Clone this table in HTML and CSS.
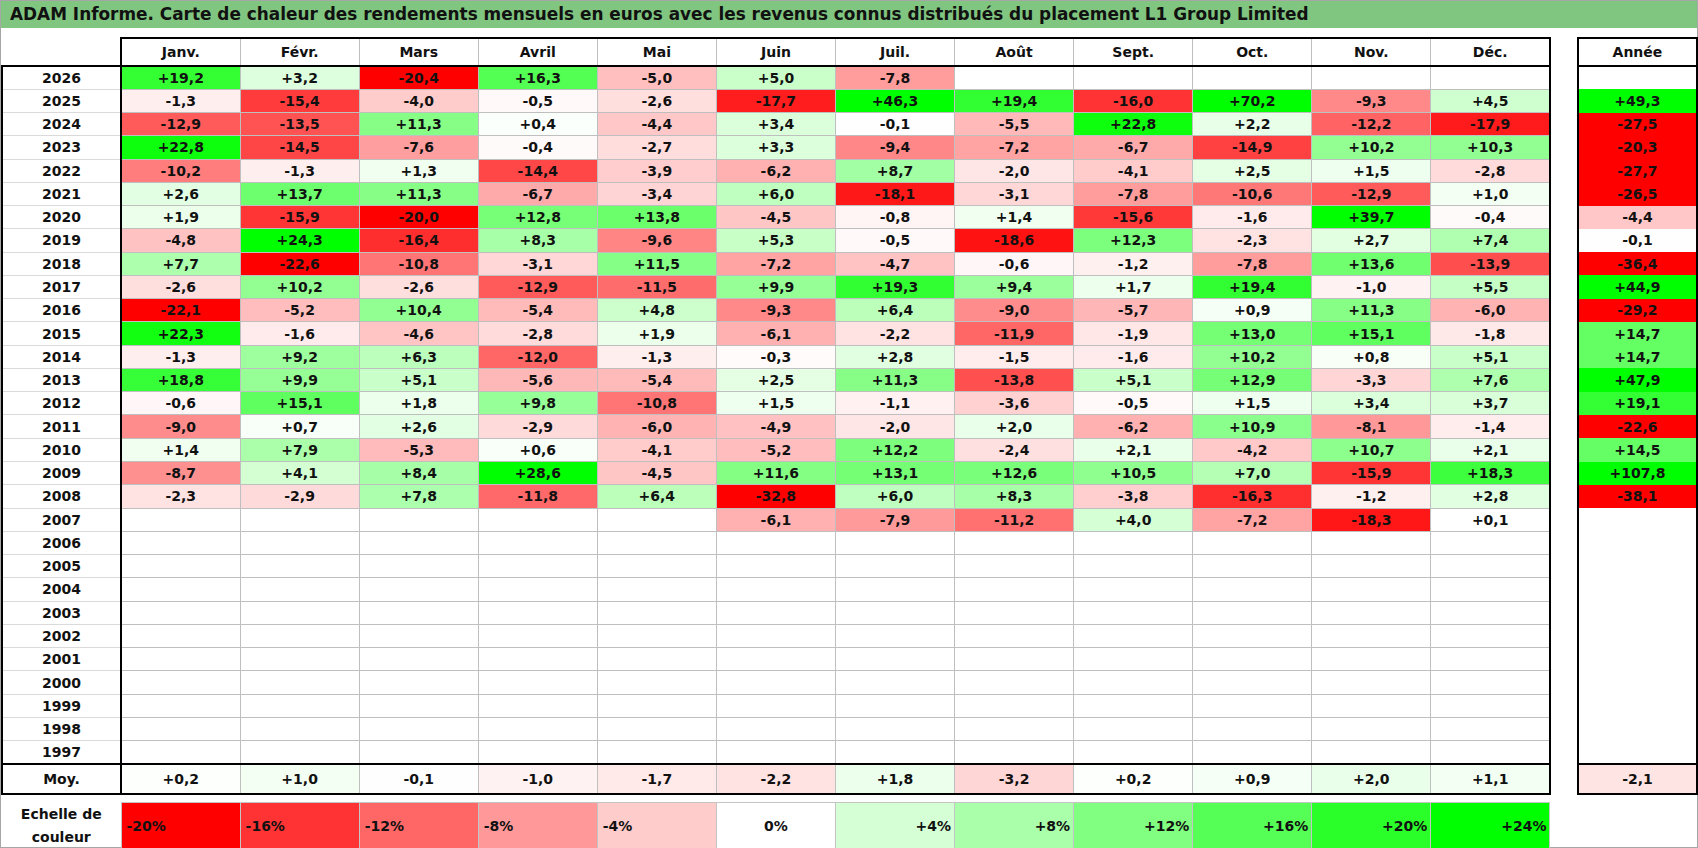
FILE: index.html
```html
<!DOCTYPE html>
<html lang="fr">
<head>
<meta charset="utf-8">
<title>ADAM Informe - Carte de chaleur</title>
<link rel="stylesheet" href="styles.css">
</head>
<body>
<div class="sheet">
  <div class="title">ADAM Informe. Carte de chaleur des rendements mensuels en euros avec les revenus connus distribués du placement L1 Group Limited</div>
  <table class="grid">
    <colgroup>
      <col class="c-lab">
      <col class="c-m"><col class="c-m"><col class="c-m"><col class="c-m"><col class="c-m"><col class="c-m">
      <col class="c-m"><col class="c-m"><col class="c-m"><col class="c-m"><col class="c-m"><col class="c-m">
      <col class="c-gap">
      <col class="c-yr">
    </colgroup>
    <thead>
      <tr class="hdr">
        <th class="lab0"></th>
        <th class="m first">Janv.</th>
        <th class="m">Févr.</th>
        <th class="m">Mars</th>
        <th class="m">Avril</th>
        <th class="m">Mai</th>
        <th class="m">Juin</th>
        <th class="m">Juil.</th>
        <th class="m">Août</th>
        <th class="m">Sept.</th>
        <th class="m">Oct.</th>
        <th class="m">Nov.</th>
        <th class="m last">Déc.</th>
        <th class="gap"></th>
        <th class="yr">Année</th>
      </tr>
    </thead>
    <tbody id="rows"></tbody>
    <tbody>
      <tr class="moy">
        <td class="lab">Moy.</td>
        <td class="m v">+0,2</td>
        <td class="m v">+1,0</td>
        <td class="m v">-0,1</td>
        <td class="m v">-1,0</td>
        <td class="m v">-1,7</td>
        <td class="m v">-2,2</td>
        <td class="m v">+1,8</td>
        <td class="m v">-3,2</td>
        <td class="m v">+0,2</td>
        <td class="m v">+0,9</td>
        <td class="m v">+2,0</td>
        <td class="m v last">+1,1</td>
        <td class="gap"></td>
        <td class="yr v">-2,1</td>
      </tr>
      <tr class="sp"><td colspan="15"></td></tr>
      <tr class="leg">
        <td class="leglab">Echelle de<br>couleur</td>
        <td class="lg v neg">-20%</td>
        <td class="lg v neg">-16%</td>
        <td class="lg v neg">-12%</td>
        <td class="lg v neg">-8%</td>
        <td class="lg v neg">-4%</td>
        <td class="lg v zero">0%</td>
        <td class="lg v pos">+4%</td>
        <td class="lg v pos">+8%</td>
        <td class="lg v pos">+12%</td>
        <td class="lg v pos">+16%</td>
        <td class="lg v pos">+20%</td>
        <td class="lg v pos">+24%</td>
        <td class="gap"></td>
        <td class="gap"></td>
      </tr>
    </tbody>
  </table>
</div>
<script src="script.js"></script>
</body>
</html>
```
FILE: styles.css
```css
html, body {
  margin: 0;
  padding: 0;
  background: #ffffff;
}
body {
  width: 1698px;
  height: 848px;
  overflow: hidden;
  font-family: "DejaVu Sans", "Liberation Sans", sans-serif;
}
.sheet {
  box-sizing: border-box;
  width: 1698px;
  height: 848px;
  border: 1px solid #a6a6a6;
}
.title {
  height: 27px;
  background: #80c680;
  font-weight: bold;
  font-size: 16.9px;
  line-height: 27px;
  padding-left: 9px;
  color: #111111;
  white-space: nowrap;
  overflow: hidden;
}
.grid {
  margin-top: 9px;
  border-collapse: collapse;
  table-layout: fixed;
  width: 1695px;
  font-weight: bold;
  font-size: 14px;
  color: #111111;
}
.grid td, .grid th {
  padding: 0;
  text-align: center;
  vertical-align: middle;
  white-space: nowrap;
  overflow: hidden;
  font-weight: bold;
}
.c-lab { width: 119px; }
.c-m { width: 119.08px; }
.c-gap { width: 28px; }
.c-yr { width: 119px; }

.hdr { height: 28px; }
.hdr th.m {
  border-top: 2px solid #000;
  border-bottom: 2px solid #000;
  border-left: 1px solid #bfbfbf;
  border-right: 1px solid #bfbfbf;
}
.hdr th.first { border-left: 2px solid #000; }
.hdr th.last { border-right: 2px solid #000; }
.hdr th.yr { border: 2px solid #000; }
.hdr th.lab0, .hdr th.gap { border: none; }

.r { height: 23.27px; }
.r td.lab {
  border-left: 2px solid #000;
  border-right: 2px solid #000;
  border-bottom: 1px solid #dadada;
}
.r.top td.lab { border-top: 2px solid #000; }
.r td.m { border: 1px solid #bfbfbf; }
.r td.last { border-right: 2px solid #000; }
.r td.gap { border: none; }
.r td.yr {
  border-left: 2px solid #000;
  border-right: 2px solid #000;
}

.moy { height: 30px; }
.moy td {
  border-top: 2px solid #000;
  border-bottom: 2px solid #000;
}
.moy td.lab {
  border-left: 2px solid #000;
  border-right: 2px solid #000;
}
.moy td.m {
  border-left: 1px solid #bfbfbf;
  border-right: 1px solid #bfbfbf;
}
.moy td.last { border-right: 2px solid #000; }
.moy td.gap { border-top: none; border-bottom: none; }
.moy td.yr { border: 2px solid #000; }

.sp { height: 9px; }
.sp td { border: none; }

.leg { height: 43px; }
.leg td.leglab {
  line-height: 23px;
  border: none;
}
.leg td.lg {
  border: 1px solid #c4c4c4;
}
.leg td.neg { text-align: left; padding-left: 5px; }
.leg td.pos { text-align: right; padding-right: 3px; }
.leg td.zero { text-align: center; }
.leg td.gap { border: none; }
```
FILE: script.js
```js
(function () {
  var data = [
    ["2026", "+19,2","+3,2","-20,4","+16,3","-5,0","+5,0","-7,8","","","","","",""],
    ["2025", "-1,3","-15,4","-4,0","-0,5","-2,6","-17,7","+46,3","+19,4","-16,0","+70,2","-9,3","+4,5","+49,3"],
    ["2024", "-12,9","-13,5","+11,3","+0,4","-4,4","+3,4","-0,1","-5,5","+22,8","+2,2","-12,2","-17,9","-27,5"],
    ["2023", "+22,8","-14,5","-7,6","-0,4","-2,7","+3,3","-9,4","-7,2","-6,7","-14,9","+10,2","+10,3","-20,3"],
    ["2022", "-10,2","-1,3","+1,3","-14,4","-3,9","-6,2","+8,7","-2,0","-4,1","+2,5","+1,5","-2,8","-27,7"],
    ["2021", "+2,6","+13,7","+11,3","-6,7","-3,4","+6,0","-18,1","-3,1","-7,8","-10,6","-12,9","+1,0","-26,5"],
    ["2020", "+1,9","-15,9","-20,0","+12,8","+13,8","-4,5","-0,8","+1,4","-15,6","-1,6","+39,7","-0,4","-4,4"],
    ["2019", "-4,8","+24,3","-16,4","+8,3","-9,6","+5,3","-0,5","-18,6","+12,3","-2,3","+2,7","+7,4","-0,1"],
    ["2018", "+7,7","-22,6","-10,8","-3,1","+11,5","-7,2","-4,7","-0,6","-1,2","-7,8","+13,6","-13,9","-36,4"],
    ["2017", "-2,6","+10,2","-2,6","-12,9","-11,5","+9,9","+19,3","+9,4","+1,7","+19,4","-1,0","+5,5","+44,9"],
    ["2016", "-22,1","-5,2","+10,4","-5,4","+4,8","-9,3","+6,4","-9,0","-5,7","+0,9","+11,3","-6,0","-29,2"],
    ["2015", "+22,3","-1,6","-4,6","-2,8","+1,9","-6,1","-2,2","-11,9","-1,9","+13,0","+15,1","-1,8","+14,7"],
    ["2014", "-1,3","+9,2","+6,3","-12,0","-1,3","-0,3","+2,8","-1,5","-1,6","+10,2","+0,8","+5,1","+14,7"],
    ["2013", "+18,8","+9,9","+5,1","-5,6","-5,4","+2,5","+11,3","-13,8","+5,1","+12,9","-3,3","+7,6","+47,9"],
    ["2012", "-0,6","+15,1","+1,8","+9,8","-10,8","+1,5","-1,1","-3,6","-0,5","+1,5","+3,4","+3,7","+19,1"],
    ["2011", "-9,0","+0,7","+2,6","-2,9","-6,0","-4,9","-2,0","+2,0","-6,2","+10,9","-8,1","-1,4","-22,6"],
    ["2010", "+1,4","+7,9","-5,3","+0,6","-4,1","-5,2","+12,2","-2,4","+2,1","-4,2","+10,7","+2,1","+14,5"],
    ["2009", "-8,7","+4,1","+8,4","+28,6","-4,5","+11,6","+13,1","+12,6","+10,5","+7,0","-15,9","+18,3","+107,8"],
    ["2008", "-2,3","-2,9","+7,8","-11,8","+6,4","-32,8","+6,0","+8,3","-3,8","-16,3","-1,2","+2,8","-38,1"],
    ["2007", "","","","","","-6,1","-7,9","-11,2","+4,0","-7,2","-18,3","+0,1",""]
  ];
  for (var y = 2006; y >= 1997; y--) {
    data.push([String(y), "","","","","","","","","","","","",""]);
  }

  function heat(v) {
    var f, c;
    if (v < 0) {
      f = Math.min(1, -v / 20);
      c = Math.round(255 * (1 - f));
      return "rgb(255," + c + "," + c + ")";
    }
    f = Math.min(1, v / 24);
    c = Math.round(255 * (1 - f));
    return "rgb(" + c + ",255," + c + ")";
  }

  var body = document.getElementById("rows");
  data.forEach(function (row, i) {
    var tr = document.createElement("tr");
    tr.className = i === 0 ? "r top" : "r";
    var lab = document.createElement("td");
    lab.className = "lab";
    lab.textContent = row[0];
    tr.appendChild(lab);
    for (var m = 1; m <= 12; m++) {
      var td = document.createElement("td");
      td.className = m === 12 ? "m v last" : "m v";
      td.textContent = row[m];
      tr.appendChild(td);
    }
    var gap = document.createElement("td");
    gap.className = "gap";
    tr.appendChild(gap);
    var yr = document.createElement("td");
    yr.className = "yr v";
    yr.textContent = row[13];
    tr.appendChild(yr);
    body.appendChild(tr);
  });

  var cells = document.querySelectorAll(".v");
  for (var k = 0; k < cells.length; k++) {
    var t = cells[k].textContent.replace("%", "").replace(",", ".").trim();
    if (t === "") continue;
    var v = parseFloat(t);
    if (isNaN(v)) continue;
    cells[k].style.backgroundColor = heat(v);
  }
})();
```
